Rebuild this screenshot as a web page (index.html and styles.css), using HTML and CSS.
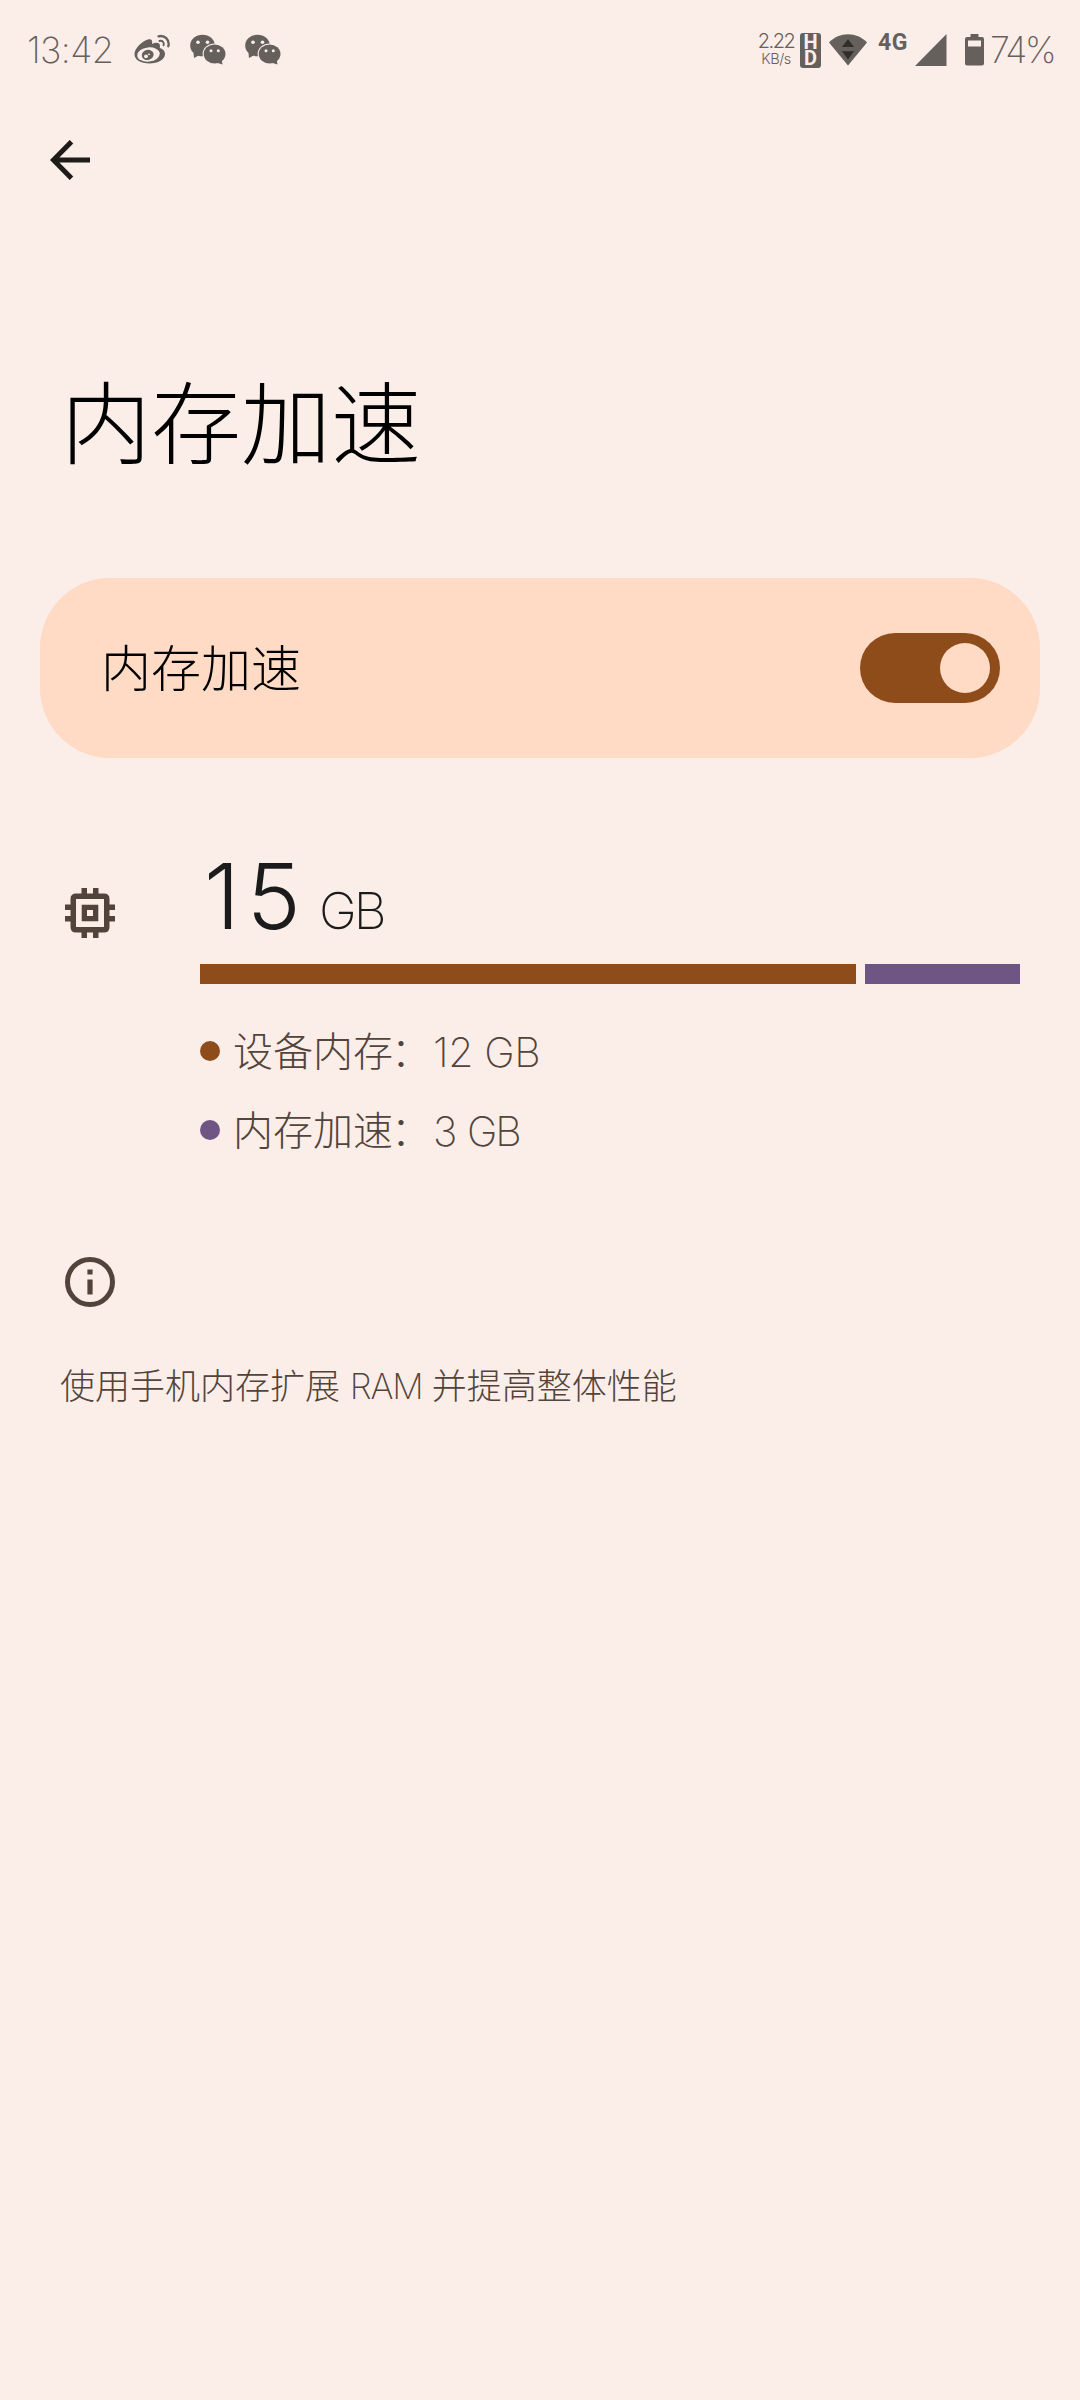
FILE: index.html
```html
<!DOCTYPE html>
<html lang="zh-CN">
<head>
<meta charset="utf-8">
<title>内存加速</title>
<link rel="stylesheet" href="styles.css">
</head>
<body>
<header class="status">
  <div class="status-left">
    <span class="clock">13:42</span>
    <svg class="weibo" width="38" height="32" viewBox="0 0 38 32" fill="none">
      <path fill="#66605d" d="M15 5.500C18 4.500 20 6 19 10C23 8 27 8 27 12C27 13 26.500 13.500 27 14C30 15 32 17 32 20C32 25.500 25 29.500 16.500 29.500C8 29.500 1.500 26 1.500 20C1.500 14 9.500 7 15 5.500Z"/>
      <ellipse cx="15.500" cy="20.500" rx="11.300" ry="7.100" fill="#fbeee9" transform="rotate(-6 15.500 20.500)"/>
      <ellipse cx="14.700" cy="20.900" rx="6" ry="5" fill="#66605d" transform="rotate(-15 14.700 20.900)"/>
      <circle cx="13" cy="22.300" r="1.900" fill="#fbeee9"/><circle cx="16" cy="20.300" r=".9" fill="#fbeee9"/>
      <path stroke="#66605d" stroke-width="2.300" stroke-linecap="round" d="M25.500 2.300C32 0.800 37 6 35.300 12.300"/>
      <path stroke="#66605d" stroke-width="2" stroke-linecap="round" d="M26.500 7C29.500 6.300 31.500 8.500 30.600 11.300"/>
    </svg>
    <svg class="wechat" width="37" height="32" viewBox="0 0 37 32"><use href="#chat"/></svg>
    <svg class="wechat" width="37" height="32" viewBox="0 0 37 32"><use href="#chat"/></svg>
  </div>
  <div class="status-right">
    <div class="speed"><span class="rate">2.22</span><span class="unit">KB/s</span></div>
    <div class="hd"><span>H</span><span>D</span></div>
    <svg class="wifi" width="38" height="32" viewBox="0 0 38 32"><path fill="#66605d" d="M0 8.500C10-2.500 28-2.500 38 8.500L19 31.500Z"/><path fill="#302d2b" d="M13 13L19 5L25 13ZM13 17.300H25L19 25.500Z"/></svg>
    <span class="network">4G</span>
    <svg class="signal" width="32" height="32" viewBox="0 0 32 32"><path fill="#66605d" d="M0 32L31.500 0V32Z"/></svg>
    <svg class="battery" width="19" height="32" viewBox="0 0 19 32"><path fill="#66605d" fill-rule="evenodd" d="M5.500 0H13.500V3H17Q19 3 19 5V29.500Q19 31.500 17 31.500H2Q0 31.500 0 29.500V5Q0 3 2 3H5.500ZM3 6.500V12.500H16V6.500Z"/></svg>
    <span class="percent">74%</span>
  </div>
</header>

<nav class="toolbar">
  <svg width="40" height="40" viewBox="0 0 40 40" fill="none" stroke="#1f1b19" stroke-width="5"><path d="M40 20H5M21.500 1.700L3.400 20L21.500 38.300"/></svg>
</nav>

<main>
  <h1 class="title">内存加速</h1>
  <section class="card">
    <span class="card-label">内存加速</span>
    <span class="switch"><span class="thumb"></span></span>
  </section>

  <section class="memory">
    <svg class="chip" width="50" height="50" viewBox="0 0 50 50" fill="#52443b">
      <path fill-rule="evenodd" d="M10 5.500H16.500V0H22V5.500H28V0H33.500V5.500H39Q44.500 5.500 44.500 11V16.500H50V22H44.500V28H50V33.500H44.500V39Q44.500 44.500 39 44.500H33.500V50H28V44.500H22V50H16.500V44.500H11Q5.500 44.500 5.500 39V33.500H0V28H5.500V22H0V16.500H5.500V11Q5.500 5.500 11 5.500ZM11 11V39H39V11ZM16.700 16.700H33.300V33.300H16.700ZM22 22V28H28V22Z"/>
    </svg>
    <div class="usage">
      <div class="total"><span class="total-num">15</span><span class="total-unit">GB</span></div>
      <div class="bar"><span class="seg device"></span><span class="seg boost"></span></div>
      <div class="legend"><i class="dot device"></i><span class="name">设备内存<span class="colon">：</span></span><span class="value">12 GB</span></div>
      <div class="legend"><i class="dot boost"></i><span class="name">内存加速<span class="colon">：</span></span><span class="value narrow">3 GB</span></div>
    </div>
  </section>

  <footer class="info">
    <svg width="50" height="50" viewBox="0 0 50 50"><circle cx="25" cy="25" r="22.500" fill="none" stroke="#52443b" stroke-width="5"/><path fill="#52443b" d="M22.400 12.500H27.600V17.500H22.400ZM22.400 22.500H27.600V37.500H22.400Z"/></svg>
    <p class="note">使用手机内存扩展 <span class="latin">RAM</span> 并提高整体性能</p>
  </footer>
</main>

<svg class="symbols" width="0" height="0">
  <symbol id="chat" viewBox="0 0 37 32">
    <path fill="#66605d" d="M3.500 19L4 24L9.500 21Z"/>
    <ellipse cx="12.500" cy="11.500" rx="12.300" ry="10.800" fill="#66605d"/>
    <ellipse cx="24.600" cy="20" rx="12" ry="10.500" fill="#fbeee9"/>
    <ellipse cx="24.600" cy="20" rx="10.900" ry="9.400" fill="#66605d"/>
    <path fill="#66605d" d="M26 28.500L32.500 30.500L31.500 25Z"/>
    <g fill="#fbeee9"><circle cx="8" cy="8.200" r="1.800"/><circle cx="17.500" cy="8.200" r="1.800"/><circle cx="21" cy="16.700" r="1.500"/><circle cx="28.300" cy="16.700" r="1.500"/></g>
  </symbol>
</svg>
</body>
</html>
```
FILE: styles.css
```css
* { box-sizing: border-box; }
body { margin: 0; width: 1080px; height: 2400px; background: #fbeee9; color: #1b1b1b; font-family: Inter, "Noto Sans CJK SC", sans-serif; font-weight: 200; overflow: hidden; }
svg { display: block; flex: none; }
.symbols { display: none; }

.status { height: 100px; padding: 0 26px 0 27px; display: flex; justify-content: space-between; color: #66605d; white-space: nowrap; }
.status-left, .status-right { display: flex; align-items: center; height: 100px; }
.clock { width: 106px; font-size: 36px; letter-spacing: -.6px; }
.weibo { margin-right: 19px; }
.wechat { margin-right: 18px; }
.speed { display: flex; flex-direction: column; align-items: center; width: 36px; margin-right: 6px; }
.rate { font-size: 20px; line-height: 18px; font-weight: 300; letter-spacing: -1.500px; }
.unit { font-size: 14.500px; line-height: 18px; font-weight: 300; letter-spacing: -.5px; }
.hd { width: 21px; height: 35px; margin-right: 8px; border-radius: 3px; background: #66605d; color: #fbeee9; display: flex; flex-direction: column; align-items: center; justify-content: center; font-family: Roboto, sans-serif; font-size: 20px; line-height: 16px; font-weight: 700; }
.network { width: 30px; margin: -15px 7px 0 11px; font-family: Roboto, sans-serif; font-size: 23px; line-height: 24px; font-weight: 700; letter-spacing: .5px; }
.signal { margin-right: 18px; }
.battery { margin-right: 6px; }
.percent { width: 64px; font-size: 36px; letter-spacing: -2.600px; }

.toolbar { height: 120px; padding: 40px 50px; }
.title { margin: 0; padding: 138px 0 0 61px; height: 358px; font-size: 90px; line-height: 133px; font-weight: 300; color: #000; }
.card { margin: 0 40px; padding: 0 40px 0 61px; height: 180px; border-radius: 70px; background: #ffdac5; display: flex; align-items: center; justify-content: space-between; }
.card-label { padding-bottom: 6px; font-size: 50px; font-weight: 300; color: #000; }
.switch { width: 140px; height: 70px; padding: 10px; border-radius: 35px; background: #8f4c1b; display: flex; justify-content: flex-end; }
.thumb { width: 50px; height: 50px; border-radius: 50%; background: #ffdac5; }

.memory { display: flex; padding: 88px 60px 0 65px; }
.chip { margin: 42px 85px 0 0; }
.usage { flex: 1; }
.total { height: 118px; display: flex; align-items: baseline; line-height: 100px; padding-left: 4px; }
.total-num { width: 115px; font-size: 91px; font-weight: 300; letter-spacing: 7px; }
.total-unit { font-size: 51px; font-weight: 250; letter-spacing: -3px; }
.bar { display: flex; height: 20px; gap: 9px; margin-bottom: 27px; }
.seg.device { width: 656px; }
.seg.boost { width: 155px; }
.device { background: #8f4c1b; }
.boost { background: #6e5583; }
.legend { display: flex; align-items: center; height: 79px; color: #52443b; }
.dot { width: 20px; height: 20px; margin: 0 13px 0 0; border-radius: 50%; }
.name { width: 200px; padding-bottom: 4px; font-size: 40px; font-weight: 300; }
.colon { margin-left: -2px; font-weight: 200; }
.value { padding-top: 2px; font-size: 41px; font-weight: 250; letter-spacing: -.4px; }
.value.narrow { letter-spacing: -2px; word-spacing: 2px; }

.info { padding: 88px 60px 0; color: #52443b; }
.info svg { margin-left: 5px; }
.note { margin: 54px 0 0; font-size: 35px; line-height: 50px; font-weight: 300; white-space: nowrap; }
.latin { margin-right: -.5px; font-weight: 250; letter-spacing: -1.200px; }
```
